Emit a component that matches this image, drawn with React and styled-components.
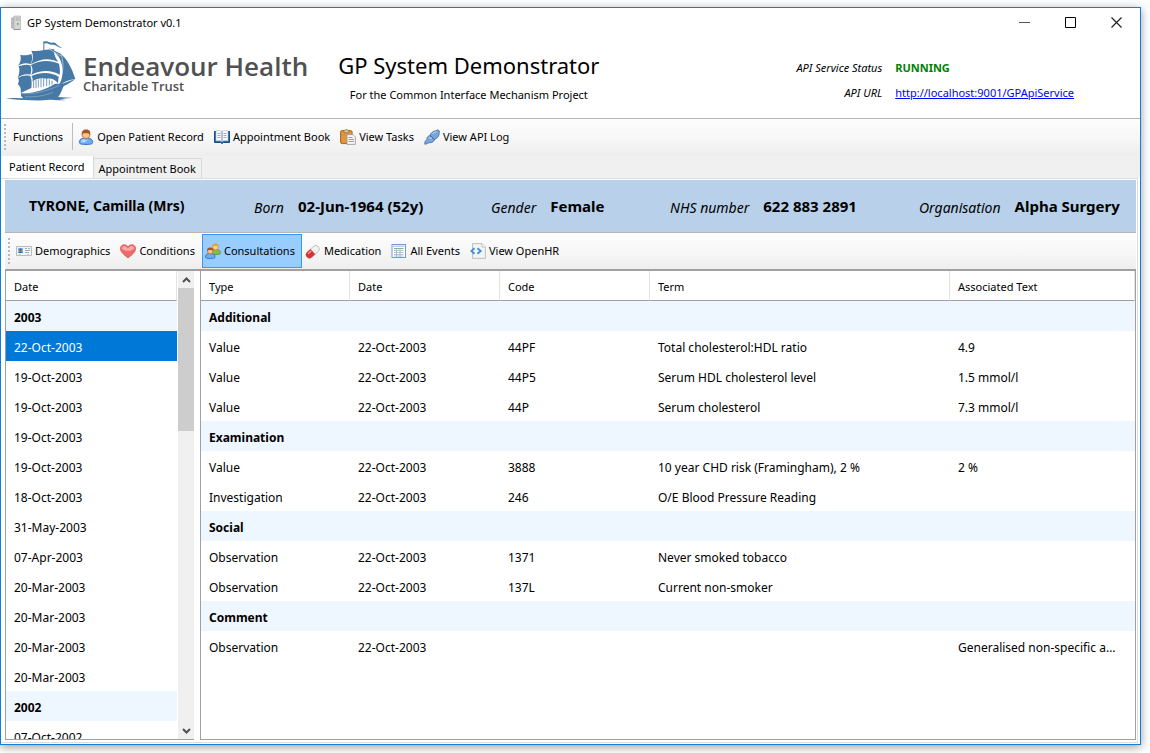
import React, { useState } from 'react';
import styled, { createGlobalStyle, css } from 'styled-components';

const GlobalStyle = createGlobalStyle`
  *, *::before, *::after { box-sizing: border-box; }
  body {
    margin: 0;
    background: #fff;
    color: #000;
    font-family: "Noto Sans", "Open Sans", sans-serif;
    font-size: 11px;
    line-height: 16px;
  }
  button { font: inherit; color: inherit; border: 0; padding: 0; background: none; }
  h1, p { margin: 0; font-weight: 400; }
`;

const Desktop = styled.div`
  height: 100vh;
  min-height: 480px;
  padding: 7px 9px 8px 0;
  display: flex;
  background: #fff;
`;

const Window = styled.div`
  flex: 1;
  min-width: 0;
  display: flex;
  flex-direction: column;
  background: #fff;
  border: 1px solid #0f7fd9;
  box-shadow: 0 2px 9px rgba(0, 0, 0, 0.4);
`;

const TitleBar = styled.div`
  height: 30px;
  padding: 0 1px 0 8px;
  display: flex;
  align-items: center;
`;

const TitleText = styled.span`
  flex: 1;
  margin-left: 4px;
`;

const WindowButton = styled.button`
  align-self: flex-start;
  width: 46px;
  height: 28px;
  display: flex;
  align-items: center;
  justify-content: center;
`;

const Header = styled.header`
  height: 80px;
  padding: 2px 66px 0 4px;
  display: flex;
  align-items: flex-start;
`;

const Brand = styled.div`
  display: flex;
  gap: 6px;
  color: #505153;
`;

const BrandText = styled.div`
  padding-top: 12px;
  font-family: "Open Sans", "Noto Sans", sans-serif;
  font-weight: 600;
`;

const BrandName = styled.div`
  font-size: 26px;
  line-height: 28px;
  white-space: nowrap;
`;

const BrandSub = styled.div`
  font-size: 13px;
  line-height: 12px;
`;

const Product = styled.div`
  margin-left: 30px;
  padding-top: 9px;
  text-align: center;
  white-space: nowrap;
`;

const ProductName = styled.h1`
  font-size: 22px;
  line-height: 32px;
`;

const ProductNote = styled.p`
  padding-top: 5px;
  line-height: 18px;
`;

const ApiInfo = styled.dl`
  margin: 20px 0 0 auto;
  display: grid;
  grid-template-columns: auto auto;
  gap: 9px 13px;
  white-space: nowrap;
`;

const ApiLabel = styled.dt`
  font-style: italic;
  text-align: right;
`;

const ApiValue = styled.dd`
  margin: 0;
  a { color: #0000ff; }
`;

const Status = styled.strong`
  color: #008000;
`;

const ToolStrip = styled.nav`
  height: ${(p) => (p.$inner ? 39 : 38)}px;
  flex: none;
  display: flex;
  align-items: center;
  padding: 0 0 2px 3px;
  background: linear-gradient(#fdfdfd, #f7f7f7 50%, #eeeeee);
  border-top: 1px solid #b6b6b6;
  ${(p) => p.$inner && css`
    padding-bottom: 0;
    border-bottom: 2px solid #a0a0a0;
  `}
`;

const Grip = styled.span`
  width: 2px;
  height: 26px;
  margin-right: 3px;
  background: repeating-linear-gradient(#b9b9b9 0 2px, transparent 2px 4px);
`;

const StripLabel = styled.span`
  padding: 0 9px 0 4px;
`;

const Divider = styled.span`
  width: 1px;
  height: 27px;
  margin-right: 2px;
  background: #bdbdbd;
`;

const ToolButton = styled.button`
  height: 34px;
  padding: 0 6px 0 2px;
  display: flex;
  align-items: center;
  gap: 3px;
  white-space: nowrap;
  border: 1px solid transparent;
  ${(p) => p.$active && css`
    background: #99ccff;
    border-color: #3399ff;
  `}
`;

const Tabs = styled.div`
  flex: none;
  height: 22px;
  display: flex;
  align-items: flex-end;
  background: #f0f0f0;
`;

const Tab = styled.button`
  height: ${(p) => (p.$active ? 22 : 20)}px;
  padding: 0 5px;
  background: ${(p) => (p.$active ? '#fff' : '#f0f0f0')};
  border: 1px solid #d9d9d9;
  border-width: ${(p) => (p.$active ? '0 1px 0 0' : '1px 1px 0 0')};
  white-space: nowrap;
  ${(p) => p.$active && css`padding: 0 8px;`}
`;

const TabPage = styled.main`
  flex: 1;
  min-height: 0;
  display: flex;
  flex-direction: column;
  margin: 0 2px 1px 0;
  padding: 1px 1px 2px 4px;
  border: 1px solid #dcdcdc;
  border-left: 0;
`;

const PatientBar = styled.section`
  flex: none;
  height: 52px;
  padding-left: 24px;
  display: grid;
  grid-template-columns: 225fr 237fr 179fr 249fr 217fr;
  align-items: center;
  background: #b8d0e9;
  font-size: 14px;
  line-height: 20px;
  white-space: nowrap;
`;

const Field = styled.div`
  display: flex;
  gap: 14px;
  align-items: center;
`;

const FieldLabel = styled.span`
  padding-top: 3px;
  font-size: 14px;
  font-style: italic;
`;

const FieldValue = styled.strong`
  font-size: 15px;
`;

const Panes = styled.div`
  flex: 1;
  min-height: 0;
  display: flex;
  gap: 6px;
`;

const ListPane = styled.section`
  flex: 0 0 189px;
  display: flex;
  overflow: hidden;
  border: 1px solid #a0a0a0;
  border-width: 0 0 1px 1px;
`;

const DetailPane = styled.section`
  flex: 1;
  min-width: 0;
  overflow: hidden;
  border: 1px solid #a0a0a0;
  border-top: 0;
`;

const ListClip = styled.div`
  flex: 1;
  overflow: hidden;
`;

const Table = styled.table`
  width: 100%;
  border-collapse: separate;
  border-spacing: 0;
  table-layout: fixed;
  font-size: 12px;
`;

const HeadCell = styled.th`
  width: ${(p) => (p.$w ? `${p.$w}px` : 'auto')};
  height: 30px;
  padding: 2px 8px 0;
  font-size: 11px;
  font-weight: 400;
  text-align: left;
  border-right: 1px solid #e2e2e2;
  border-bottom: 1px solid #a0a0a0;
`;

const Cell = styled.td`
  height: 30px;
  padding: 4px 14px 0 8px;
  overflow: hidden;
  text-overflow: ellipsis;
  white-space: nowrap;
`;

const GroupCell = styled.th`
  height: 30px;
  padding: 4px 8px 0;
  text-align: left;
  font-weight: 700;
  background: #eef6ff;
`;

const DateRow = styled.tr`
  ${(p) => p.$selected && css`
    background: #0078d7;
    color: #fff;
  `}
`;

const ScrollBar = styled.div`
  width: 17px;
  border-left: 1px solid #fff;
  display: flex;
  flex-direction: column;
  background: #f0f0f0;
`;

const ScrollArrow = styled.button`
  height: 17px;
  display: flex;
  align-items: center;
  justify-content: center;
`;

const ScrollTrack = styled.div`
  flex: 1;
`;

const ScrollThumb = styled.div`
  height: 33%;
  background: #cdcdcd;
`;

function Ship() {
  return (
    <svg width="72" height="62" viewBox="12 120 216 186" aria-hidden="true">
      <g fill="#4679a5">
        <path d="M127 124h3v30h-3zM130 125c9-5 15 5 24 3s12 4 16 8l13 8c-9 1-14-6-20-8-7-3-10 0-17-3-6-2-10-5-16-2z" />
        <path d="M91 152c23 4 49-6 69-4-3 13 4 27 12 38-28-15-57-9-82 7 7-14 8-28 1-41z" />
        <path d="M90 195c25-14 55-17 84-4 2 12 4 20 2 33-25-15-56-15-85 0 5-9 5-19-1-29z" />
        <path d="M91 228c27-12 58-13 82 2l-2 20c-8-12-20-16-33-14-14-3-30-2-44 8 2-6 1-11-3-16z" />
        <path d="M58 164c12 4 23 1 33-2 4 10 3 20-2 30-14-4-27-3-38 6 8-11 10-22 7-34z" />
        <path d="M53 199c11-4 23-7 35-3 4 10 3 20 0 28-14-3-27 0-38 10 5-12 7-24 3-35z" />
        <path d="M51 234c11-7 24-9 37-6 4 9 5 20 3 36l-32 15c2-11-1-21-9-27 4-5 5-11 1-18z" />
        <path d="M133 139l46 22c17 14 33 39 44 76-17 1-34 9-49 19 12-22 14-49 5-74-5-15-22-31-46-43z" />
        <path d="M61 279c31 4 75-11 100-27l27-2 34-13c-17 15-29 17-35 23-5 11-8 22-16 32-24 10-79 10-106 1-6-4-6-9-4-14z" />
        <path d="M15 297c20-6 37-1 54-3 36 5 74 3 101-3l49 3c-21-1-30 3-45 4l21 2c-17 2-36-1-53-1-29 5-56 0-80 1l-36-3z" />
      </g>
      <path d="M98 264v-22M105 264v-24M112 262v-24M120 262v-26M128 260v-24M137 258v-22M145 256v-18M153 254v-12" fill="none" stroke="#4679a5" strokeWidth="3" strokeOpacity=".75" />
      <g fill="none" stroke="#fff">
        <path d="M180 163c10 28 7 57-7 88M136 142l44 26" strokeWidth="1.500" />
        <path d="M65 281c38 3 75-10 111-25M72 290c30 2 61-3 84-13" strokeWidth="1" strokeOpacity=".8" />
      </g>
    </svg>
  );
}

function ServerIcon() {
  return (
    <svg width="14" height="16" viewBox="0 0 14 16" aria-hidden="true">
      <path d="M2 3l4-2v14l-4-2z" fill="#bcbcbc" />
      <path d="M5 1h6.500v13.500H5z" fill="#d6d6d6" stroke="#b4b4b4" strokeWidth=".7" />
      <path d="M6.500 3h4M6.500 5h4" stroke="#ababab" />
      <path d="M8 8h1.500v1.700H8z" fill="#4fb25f" />
      <path d="M4.600 14.500h7" stroke="#8a8a8a" strokeWidth=".8" />
    </svg>
  );
}

function PersonIcon() {
  return (
    <svg width="16" height="16" viewBox="0 0 16 16" aria-hidden="true">
      <path d="M1.300 13.500C1.300 10 4 9 8 9s6.700 1 6.700 4.500c0 1.600-3 2-6.700 2s-6.700-.4-6.700-2z" fill="#6cacf0" stroke="#1d62b8" strokeWidth=".8" />
      <path d="M3 13c.3-2 1.500-2.800 3-3l2 1.500L10 10c-1 3-4 4-7 3z" fill="#b5d7fb" />
      <circle cx="8" cy="5.700" r="3.900" fill="#f7c48c" stroke="#a8622a" strokeWidth=".7" />
      <path d="M3.900 6.200C3.300 2.500 5 .6 8.300.6s4.600 2.300 3.800 5.600C11.500 4 10 4.300 8 4.200 6 4.100 4.700 4 3.900 6.200z" fill="#a75420" />
    </svg>
  );
}

function BookIcon() {
  return (
    <svg width="16" height="16" viewBox="0 0 16 16" aria-hidden="true">
      <path d="M.5 2.500h15v11H9.500l-1.500 1-1.500-1h-6z" fill="#2866a6" stroke="#174a80" />
      <path d="M2 2c2.500-.8 5-.4 6 .6 1-1 3.500-1.400 6-.6v10c-2.500-.6-5-.3-6 .8-1-1.100-3.500-1.400-6-.8z" fill="#f7f9fc" stroke="#9cb3cc" strokeWidth=".5" />
      <path d="M3.500 4.500h3M3.500 6.500h3M3.500 8.500h3M9.500 4.500h3M9.500 6.500h3M9.500 8.500h3" stroke="#a0aab5" />
      <path d="M8 2.600v10.200" stroke="#6a8bad" />
    </svg>
  );
}

function ClipboardIcon() {
  return (
    <svg width="16" height="16" viewBox="0 0 16 16" aria-hidden="true">
      <rect x=".6" y="1.600" width="11.500" height="13" rx="1.500" fill="#e1963a" stroke="#a9631b" />
      <path d="M4 2.500C4 1.500 5 .6 6.300.6S8.800 1.500 8.800 2.500v1.300H4z" fill="#d5c7a0" stroke="#85703e" strokeWidth=".7" />
      <path d="M7 5.600h6l2.400 2.400v7.400H7z" fill="#f6f6f6" stroke="#969696" strokeWidth=".8" />
      <path d="M8.500 8.500h4M8.500 10.500h5.500M8.500 12.500h5.500" stroke="#9c9c9c" />
    </svg>
  );
}

function PlugIcon() {
  return (
    <svg width="16" height="16" viewBox="0 0 16 16" aria-hidden="true">
      <path d="M.8 15.200C.5 12 2 11.500 3 10.500c-.5-2 1-3.500 3-4 .5-2.500 3.500-4.500 5.500-4.700L14 .8 15.400 2c-.2 2 0 3.500-1 5-1 2-2 2.800-3.700 3.200-.5 2-2.500 3.800-5 3.500-1.500 0-2.500 1.500-4.900 1.500z" fill="#7aa5dc" stroke="#43699f" strokeWidth=".8" />
      <path d="M6 6.500l4.500 4.200" stroke="#355b92" />
      <path d="M4.500 9.500c1-.8 2.500-1 3.500 0M8.500 5c1-1.200 2.300-2 4-2.200" stroke="#c9dff7" fill="none" />
    </svg>
  );
}

function CardIcon() {
  return (
    <svg width="16" height="16" viewBox="0 0 16 16" aria-hidden="true">
      <path d="M.5 3.500h15v9h-3v-1h-1v1h-7v-1h-1v1h-3z" fill="#f3f6f9" stroke="#b4bbc2" />
      <rect x="2" y="5" width="5" height="5" fill="#7db4e8" />
      <circle cx="4.500" cy="6.800" r="1.200" fill="#8a5630" />
      <path d="M2.500 10c.3-2 3.700-2 4 0z" fill="#1d65b3" />
      <path d="M9 5.500h2M12 5.500h2M9 7.500h5M9 9.500h4" stroke="#a3adb8" />
    </svg>
  );
}

function HeartIcon() {
  return (
    <svg width="16" height="16" viewBox="0 0 16 16" aria-hidden="true">
      <path d="M8 15C4 11.500.5 9.500.5 5.500.5 1 6 .5 8 4c2-3.500 7.500-3 7.500 1.500C15.500 9.500 12 11.500 8 15z" fill="#ef6a6a" stroke="#d24b4b" strokeWidth=".7" />
      <path d="M2 6C1.800 2.500 5.500 2 7.200 5 8 6.500 9 4 10.500 3.200c2-.8 3.700.3 3.600 2.600-2.600 2.400-8 3-12.100.2z" fill="#f9aaaa" />
    </svg>
  );
}

function PeopleIcon() {
  return (
    <svg width="16" height="16" viewBox="0 0 16 16" aria-hidden="true">
      <path d="M5.500 10c0-3 2-3.500 5-3.500s5 .8 5 3.300c0 1.500-2 1.700-5 1.700s-5 0-5-1.500z" fill="#83bf48" stroke="#4c8524" strokeWidth=".7" />
      <circle cx="10.500" cy="4" r="2.900" fill="#f9cf91" stroke="#b57a24" strokeWidth=".6" />
      <path d="M7.500 4C7 1.500 8.500.4 10.500.4S14 1.500 13.500 4c-.8-1.500-5-1.500-6 0z" fill="#dca43a" />
      <path d="M.5 14c0-3 2-3.500 4.700-3.500S10 11 10 14c0 1.300-2 1.500-4.800 1.500S.5 15.300.5 14z" fill="#6cacf0" stroke="#1d62b8" strokeWidth=".7" />
      <circle cx="5.200" cy="8" r="2.900" fill="#f7c48c" stroke="#a8622a" strokeWidth=".6" />
      <path d="M2.200 8C1.700 5.500 3.200 4.400 5.200 4.400S8.700 5.500 8.200 8c-.8-1.500-5-1.500-6 0z" fill="#a75420" />
    </svg>
  );
}

function PillIcon() {
  return (
    <svg width="16" height="16" viewBox="0 0 16 16" aria-hidden="true">
      <g transform="rotate(-42 7.500 9)">
        <rect x="0" y="5.500" width="15.500" height="7" rx="3.500" fill="#f1f1f1" stroke="#b4b4b4" strokeWidth=".7" />
        <path d="M8 5.500v7H3.500a3.500 3.500 0 010-7z" fill="#d83232" />
        <path d="M3 7.300h4.500" stroke="#f39b9b" strokeWidth="1.500" />
      </g>
    </svg>
  );
}

function GridIcon() {
  return (
    <svg width="16" height="16" viewBox="0 0 16 16" aria-hidden="true">
      <rect x="1" y="1.500" width="13.500" height="13" fill="#fff" stroke="#6f9ad3" />
      <path d="M2 2.500h11.500v1.500H2z" fill="#b7d0f0" />
      <path d="M3 5.500h9.500" stroke="#7fb46c" />
      <path d="M3 7.500h9.500M3 9.500h9.500M3 11.500h9.500M3 13h9.500" stroke="#a9b8c8" strokeWidth=".8" />
      <path d="M5.500 5v9M9 5v9" stroke="#8db2de" strokeWidth=".8" />
    </svg>
  );
}

function CodeIcon() {
  return (
    <svg width="16" height="16" viewBox="0 0 16 16" aria-hidden="true">
      <path d="M2.500.6h9.500l3.400 3.400v11.400h-12.900z" fill="#f4f4f4" stroke="#b3b3b3" strokeWidth=".8" />
      <path d="M12 .6V4h3.400" fill="#fff" stroke="#b3b3b3" strokeWidth=".8" />
      <path d="M4.500 5.200L1.300 8l3.200 2.800M7.500 5.200L10.700 8l-3.200 2.800" fill="none" stroke="#3f8fd8" strokeWidth="1.900" />
    </svg>
  );
}

function Chevron({ down }) {
  return (
    <svg width="9" height="6" viewBox="0 0 9 6" aria-hidden="true">
      <path d={down ? 'M1 1l3.500 3.500L8 1' : 'M1 5l3.500-3.500L8 5'} fill="none" stroke="#505050" strokeWidth="2" />
    </svg>
  );
}

const functions = [
  ['Open Patient Record', PersonIcon],
  ['Appointment Book', BookIcon],
  ['View Tasks', ClipboardIcon],
  ['View API Log', PlugIcon],
];

const views = [
  ['Demographics', CardIcon],
  ['Conditions', HeartIcon],
  ['Consultations', PeopleIcon],
  ['Medication', PillIcon],
  ['All Events', GridIcon],
  ['View OpenHR', CodeIcon],
];

const fields = [
  ['Born', '02-Jun-1964 (52y)'],
  ['Gender', 'Female'],
  ['NHS number', '622 883 2891'],
  ['Organisation', 'Alpha Surgery'],
];

const years = [
  ['2003', ['22-Oct-2003', '19-Oct-2003', '19-Oct-2003', '19-Oct-2003', '19-Oct-2003', '18-Oct-2003', '31-May-2003', '07-Apr-2003', '20-Mar-2003', '20-Mar-2003', '20-Mar-2003', '20-Mar-2003']],
  ['2002', ['07-Oct-2002']],
];

const columns = [['Type', 149], ['Date', 150], ['Code', 150], ['Term', 300], ['Associated Text']];

const groups = [
  ['Additional', [
    ['Value', '22-Oct-2003', '44PF', 'Total cholesterol:HDL ratio', '4.9'],
    ['Value', '22-Oct-2003', '44P5', 'Serum HDL cholesterol level', '1.5 mmol/l'],
    ['Value', '22-Oct-2003', '44P', 'Serum cholesterol', '7.3 mmol/l'],
  ]],
  ['Examination', [
    ['Value', '22-Oct-2003', '3888', '10 year CHD risk (Framingham), 2 %', '2 %'],
    ['Investigation', '22-Oct-2003', '246', 'O/E Blood Pressure Reading', ''],
  ]],
  ['Social', [
    ['Observation', '22-Oct-2003', '1371', 'Never smoked tobacco', ''],
    ['Observation', '22-Oct-2003', '137L', 'Current non-smoker', ''],
  ]],
  ['Comment', [
    ['Observation', '22-Oct-2003', '', '', 'Generalised non-specific abdominal pain'],
  ]],
];

export default function App() {
  const [view, setView] = useState('Consultations');
  const [selected, setSelected] = useState('2003-0');

  return (
    <Desktop>
      <GlobalStyle />
      <Window>
        <TitleBar>
          <ServerIcon />
          <TitleText>GP System Demonstrator v0.1</TitleText>
          <WindowButton aria-label="Minimise">
            <svg width="11" height="11"><path d="M0 5.500h11" stroke="#555" /></svg>
          </WindowButton>
          <WindowButton aria-label="Maximise">
            <svg width="11" height="11"><path d="M.5.5h10v10H.5z" fill="none" stroke="#000" /></svg>
          </WindowButton>
          <WindowButton aria-label="Close">
            <svg width="11" height="11"><path d="M.5.5l10 10M10.500.5l-10 10" stroke="#222" strokeWidth="1.200" /></svg>
          </WindowButton>
        </TitleBar>

        <Header>
          <Brand>
            <Ship />
            <BrandText>
              <BrandName>Endeavour Health</BrandName>
              <BrandSub>Charitable Trust</BrandSub>
            </BrandText>
          </Brand>
          <Product>
            <ProductName>GP System Demonstrator</ProductName>
            <ProductNote>For the Common Interface Mechanism Project</ProductNote>
          </Product>
          <ApiInfo>
            <ApiLabel>API Service Status</ApiLabel>
            <ApiValue><Status>RUNNING</Status></ApiValue>
            <ApiLabel>API URL</ApiLabel>
            <ApiValue><a href="http://localhost:9001/GPApiService">http://localhost:9001/GPApiService</a></ApiValue>
          </ApiInfo>
        </Header>

        <ToolStrip aria-label="Functions">
          <Grip />
          <StripLabel>Functions</StripLabel>
          <Divider />
          {functions.map(([label, Icon]) => (
            <ToolButton key={label}><Icon />{label}</ToolButton>
          ))}
        </ToolStrip>

        <Tabs role="tablist">
          <Tab role="tab" aria-selected="true" $active>Patient Record</Tab>
          <Tab role="tab" aria-selected="false">Appointment Book</Tab>
        </Tabs>

        <TabPage>
          <PatientBar>
            <strong>TYRONE, Camilla (Mrs)</strong>
            {fields.map(([label, value]) => (
              <Field key={label}>
                <FieldLabel>{label}</FieldLabel>
                <FieldValue>{value}</FieldValue>
              </Field>
            ))}
          </PatientBar>

          <ToolStrip $inner aria-label="Record views">
            <Grip />
            {views.map(([label, Icon]) => (
              <ToolButton key={label} $active={view === label} onClick={() => setView(label)}>
                <Icon />{label}
              </ToolButton>
            ))}
          </ToolStrip>

          <Panes>
            <ListPane>
              <ListClip>
                <Table>
                  <thead><tr><HeadCell>Date</HeadCell></tr></thead>
                  <tbody>
                    {years.map(([year, dates]) => (
                      <React.Fragment key={year}>
                        <tr><GroupCell>{year}</GroupCell></tr>
                        {dates.map((date, i) => {
                          const id = `${year}-${i}`;
                          return (
                            <DateRow key={id} $selected={selected === id} onClick={() => setSelected(id)}>
                              <Cell>{date}</Cell>
                            </DateRow>
                          );
                        })}
                      </React.Fragment>
                    ))}
                  </tbody>
                </Table>
              </ListClip>
              <ScrollBar>
                <ScrollArrow aria-label="Scroll up"><Chevron /></ScrollArrow>
                <ScrollTrack><ScrollThumb /></ScrollTrack>
                <ScrollArrow aria-label="Scroll down"><Chevron down /></ScrollArrow>
              </ScrollBar>
            </ListPane>

            <DetailPane>
              <Table>
                <thead>
                  <tr>{columns.map(([label, w]) => <HeadCell key={label} $w={w}>{label}</HeadCell>)}</tr>
                </thead>
                <tbody>
                  {groups.map(([name, rows]) => (
                    <React.Fragment key={name}>
                      <tr><GroupCell colSpan={5}>{name}</GroupCell></tr>
                      {rows.map((row) => (
                        <tr key={row.join('|')}>
                          {row.map((text, i) => <Cell key={columns[i][0]}>{text}</Cell>)}
                        </tr>
                      ))}
                    </React.Fragment>
                  ))}
                </tbody>
              </Table>
            </DetailPane>
          </Panes>
        </TabPage>
      </Window>
    </Desktop>
  );
}
